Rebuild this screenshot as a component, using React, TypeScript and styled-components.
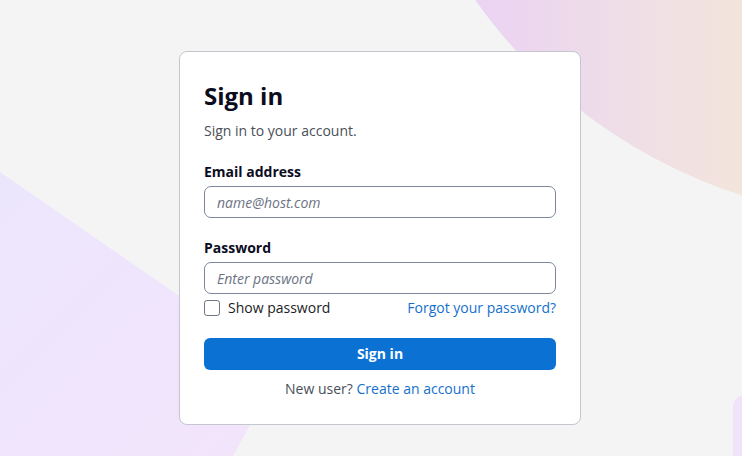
import React from "react";
import styled, { createGlobalStyle } from "styled-components";

const Global = createGlobalStyle`
  html, body { margin: 0; padding: 0; }
  body {
    background: #f4f4f4;
    font-family: "Open Sans", "Noto Sans", sans-serif;
    color: #111827;
  }
  * { box-sizing: border-box; }
`;

const Page = styled.div`
  position: relative;
  width: 100%;
  min-height: 456px;
  overflow: hidden;
  display: flex;
  justify-content: center;
  align-items: flex-start;
  padding: 51px 0 0 18px;
`;

const Backdrop = styled.svg`
  position: absolute;
  inset: 0;
  width: 742px;
  height: 456px;
  z-index: 0;
`;

const Card = styled.form`
  position: relative;
  z-index: 1;
  width: 402px;
  background: #ffffff;
  border: 1px solid #c4c7cd;
  border-radius: 8px;
  padding: 28px 24px 25px;
  display: flex;
  flex-direction: column;
`;

const Title = styled.h1`
  margin: 0;
  font-size: 24px;
  line-height: 32px;
  font-weight: 700;
  color: #0b0d1f;
`;

const Subtitle = styled.p`
  margin: 9px 0 21px;
  font-size: 14px;
  line-height: 20px;
  color: #4a4f58;
`;

const Field = styled.div<{ $gap?: number }>`
  display: flex;
  flex-direction: column;
  gap: 4px;
  margin-bottom: ${(p) => p.$gap ?? 0}px;
`;

const Label = styled.label`
  font-size: 14px;
  line-height: 20px;
  font-weight: 700;
  color: #0b0d1f;
`;

const Input = styled.input`
  height: 32px;
  width: 100%;
  border: 1px solid #7d8799;
  border-radius: 7px;
  padding: 0 12px;
  font-family: inherit;
  font-size: 14px;
  color: #111827;
  background: #fff;
  outline: none;
  &::placeholder {
    font-style: italic;
    color: #6c7383;
  }
`;

const OptionsRow = styled.div`
  margin-top: 4px;
  display: flex;
  align-items: center;
  justify-content: space-between;
  height: 20px;
`;

const CheckLabel = styled.label`
  display: flex;
  align-items: center;
  gap: 8px;
  font-size: 14px;
  line-height: 20px;
  color: #1a1d24;
`;

const Box = styled.input`
  appearance: none;
  margin: 0;
  width: 16px;
  height: 16px;
  border: 1px solid #6f7684;
  border-radius: 3px;
  background: #fff;
`;

const Link = styled.a`
  font-size: 14px;
  line-height: 20px;
  color: #1570cd;
  text-decoration: none;
`;

const Button = styled.button`
  margin-top: 20px;
  height: 32px;
  width: 100%;
  border: none;
  border-radius: 6px;
  background: #0b72d4;
  color: #fff;
  font-family: inherit;
  font-size: 14px;
  line-height: 20px;
  font-weight: 700;
  padding: 0 0 1px;
`;

const Footer = styled.p`
  margin: 9px 0 0;
  text-align: center;
  font-size: 14px;
  line-height: 20px;
  color: #4a4f58;
`;

export default function App() {
  return (
    <>
      <Global />
      <Page>
        <Backdrop viewBox="0 0 742 456" aria-hidden="true">
          <defs>
            <linearGradient id="arc" gradientUnits="userSpaceOnUse" x1="470" y1="0" x2="742" y2="0">
              <stop offset="0" stopColor="#ead3f4" />
              <stop offset="1" stopColor="#f3e5dc" />
            </linearGradient>
            <linearGradient id="left" gradientUnits="userSpaceOnUse" x1="0" y1="200" x2="250" y2="456">
              <stop offset="0" stopColor="#ece6fd" />
              <stop offset="1" stopColor="#f2e4fb" />
            </linearGradient>
          </defs>
          <circle cx="900" cy="-300" r="520" fill="url(#arc)" />
          <path d="M0 172 L282 367 L233 456 L0 456 Z" fill="url(#left)" />
          <rect x="733" y="395" width="60" height="120" rx="12" fill="#f0e4fb" />
        </Backdrop>
        <Card onSubmit={(e) => e.preventDefault()}>
          <Title>Sign in</Title>
          <Subtitle>Sign in to your account.</Subtitle>
          <Field $gap={20}>
            <Label htmlFor="email">Email address</Label>
            <Input id="email" type="email" placeholder="name@host.com" />
          </Field>
          <Field>
            <Label htmlFor="password">Password</Label>
            <Input id="password" type="password" placeholder="Enter password" />
          </Field>
          <OptionsRow>
            <CheckLabel>
              <Box type="checkbox" />
              Show password
            </CheckLabel>
            <Link href="#">Forgot your password?</Link>
          </OptionsRow>
          <Button type="submit">Sign in</Button>
          <Footer>
            New user? <Link href="#">Create an account</Link>
          </Footer>
        </Card>
      </Page>
    </>
  );
}
